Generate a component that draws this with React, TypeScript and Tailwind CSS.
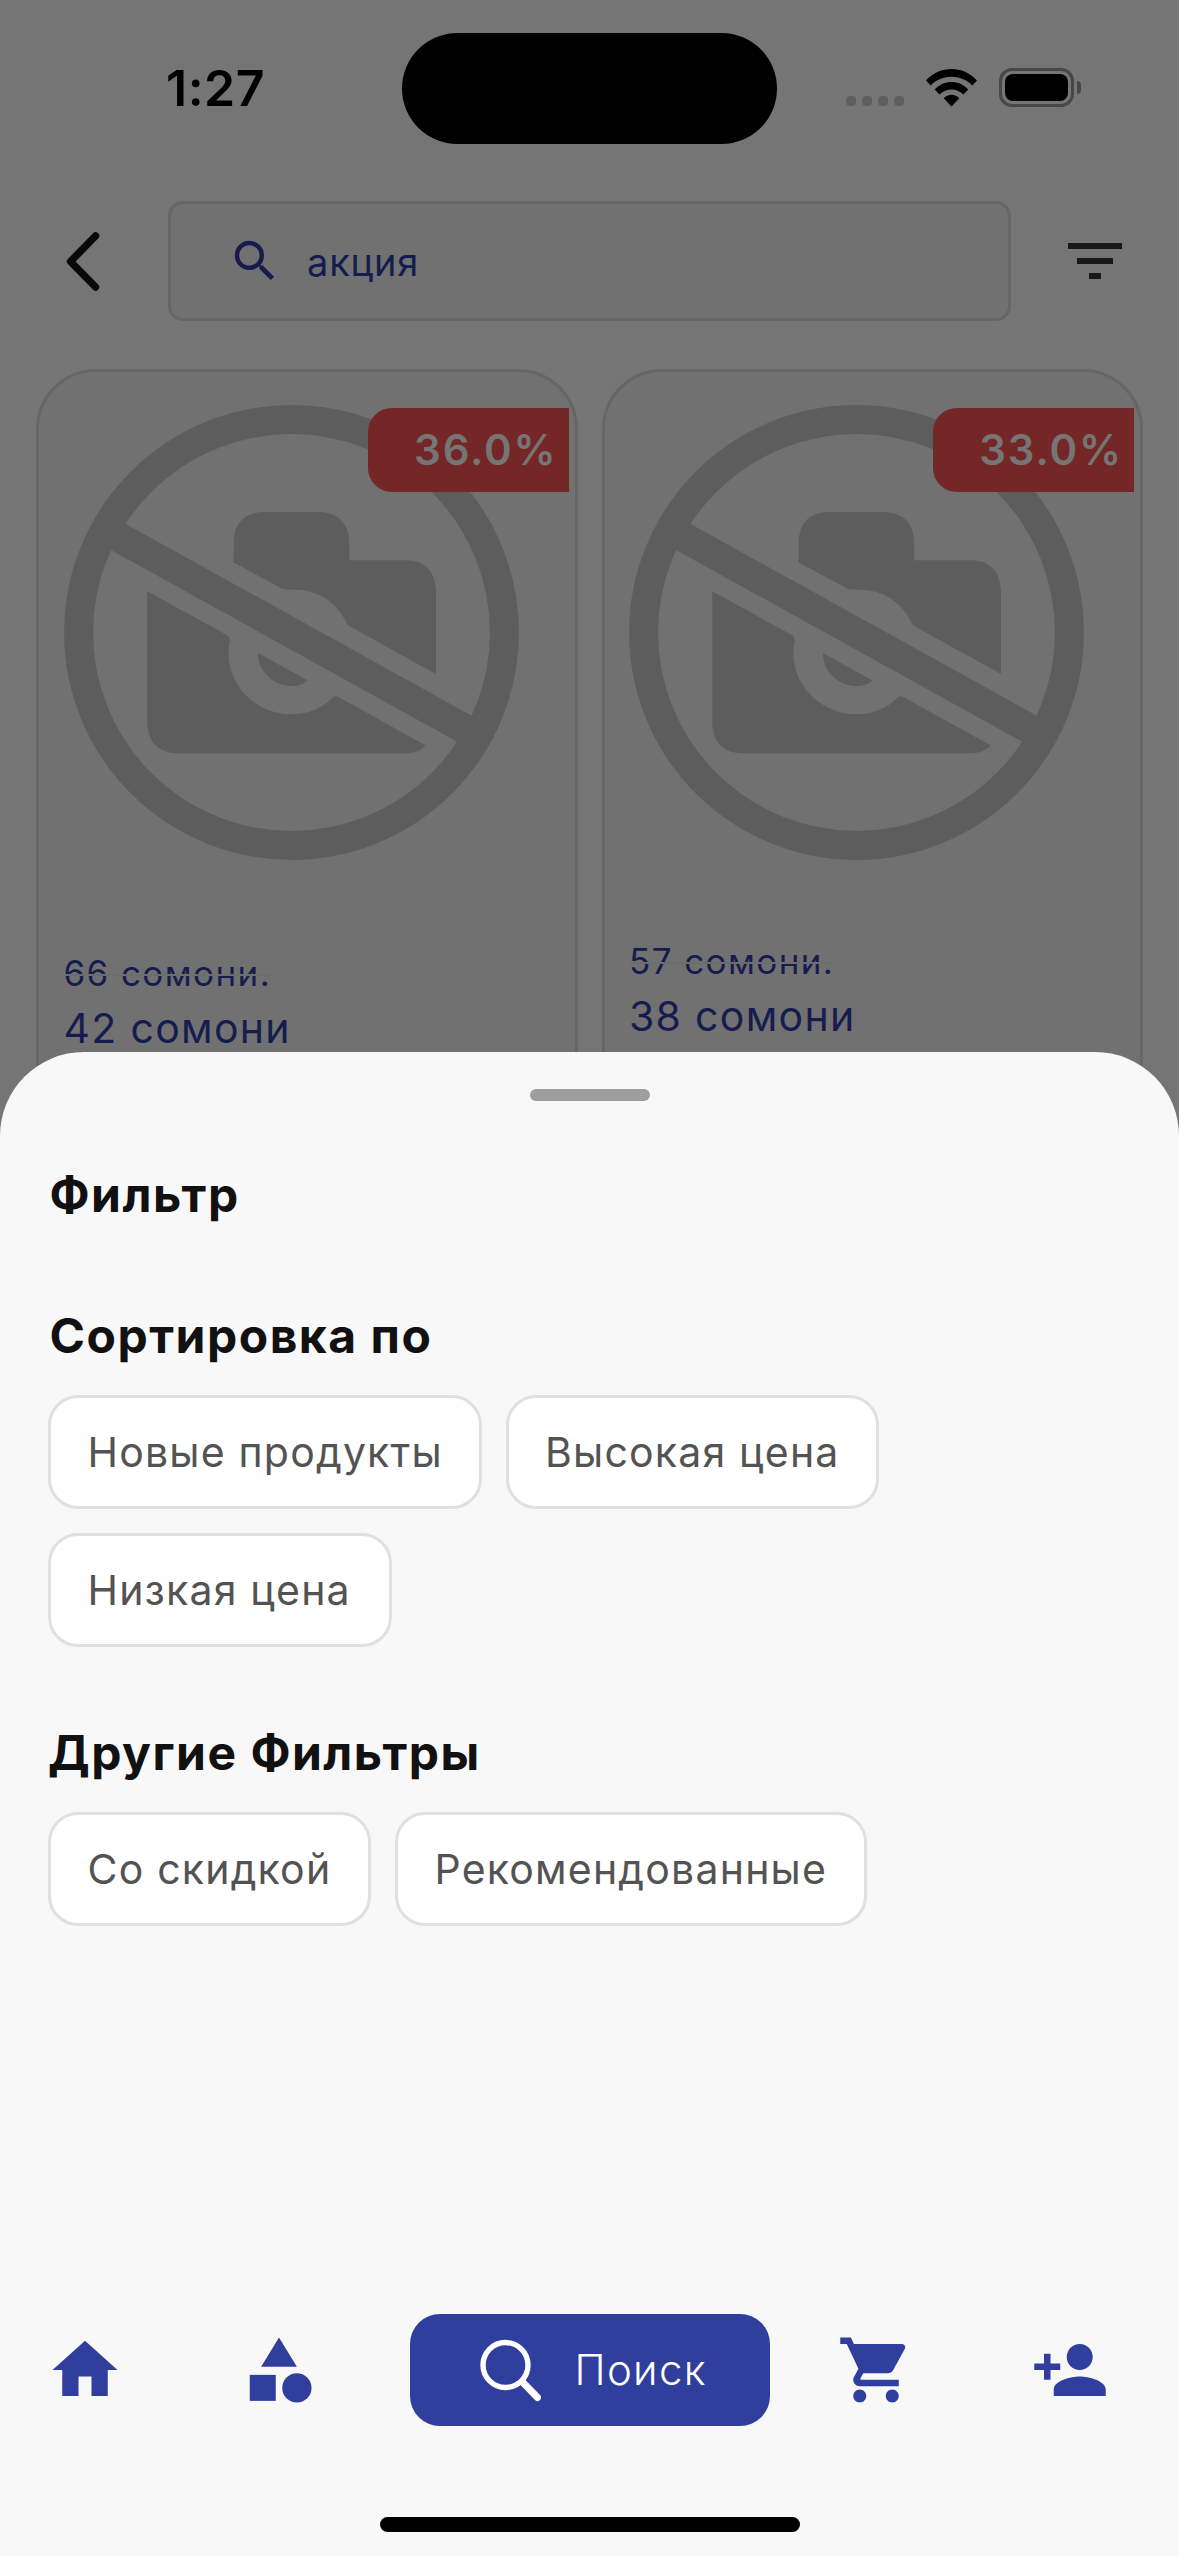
import React from "react";
import {
  MdHome,
  MdCategory,
  MdShoppingCart,
  MdPersonAdd,
  MdSearch,
  MdFilterList,
} from "react-icons/md";

function StatusBar() {
  return (
    <div className="flex h-[177px] items-start">
      <div className="mt-[63px] ml-[166px] w-[236px] text-[50px] leading-[50px] font-semibold tracking-[0.5px] text-black">
        1:27
      </div>
      <div className="mt-[33px] h-[111px] w-[375px] rounded-full bg-black" />
      <div className="mt-[96px] ml-[69px] flex gap-[6px]">
        {[0, 1, 2, 3].map((i) => (
          <span key={i} className="h-[10px] w-[10px] rounded-[4px] bg-[#5e5e5e]" />
        ))}
      </div>
      <svg className="mt-[69px] ml-[22px]" width="51" height="38" viewBox="0 0 51 38">
        <path d="M0 11.5C14-3.8 37-3.8 51 11.5L46.2 16.4C35 5 16 5 4.8 16.4Z" />
        <path d="M8.7 20.5C18 10.6 33 10.6 42.3 20.5L37.4 25.4C30.5 18.8 20.5 18.8 13.6 25.4Z" />
        <path d="M17.7 29.3C22 24.6 29 24.6 33.3 29.3L25.5 37.5Z" />
      </svg>
      <div className="mt-[68px] ml-[22px] h-[39px] w-[75px] rounded-[13px] border-[3px] border-[#474747] p-[3px]">
        <div className="h-full w-full rounded-[8px] bg-black" />
      </div>
      <div className="mt-[81px] ml-[3px] h-[13px] w-[4px] rounded-r-full bg-[#474747]" />
    </div>
  );
}

function SearchHeader() {
  return (
    <div className="flex h-[192px] items-start pt-[24px]">
      <svg className="mt-[31px] ml-[65px]" width="36" height="59" viewBox="0 0 36 59">
        <path
          d="M30.5 4L5.5 29.5L30.5 55"
          fill="none"
          stroke="#080808"
          strokeWidth="7.4"
          strokeLinecap="round"
          strokeLinejoin="round"
        />
      </svg>
      <div className="ml-[67px] flex h-[120px] w-[843px] items-center rounded-[15px] border-[3px] border-[#666666] bg-[#717171] pl-[57px]">
        <MdSearch size={54} color="#161d4e" />
        <span className="mt-[2px] ml-[25px] text-[38px] leading-[60px] tracking-[0.8px] text-[#161d4e]">
          акция
        </span>
      </div>
      <MdFilterList className="mt-[24px] ml-[48px]" size={72} color="#181818" />
    </div>
  );
}

function NoPhoto() {
  return (
    <svg width="455" height="455" viewBox="63.7 404.7 455 455" fill="#5d5d5d">
      <circle cx="291.2" cy="632.2" r="212.9" fill="none" stroke="#5d5d5d" strokeWidth="29" />
      <path d="M98 525.6L484 739.4" stroke="#5d5d5d" strokeWidth="29.8" />
      <path d="M232.7 561.8L233.4 558V541Q234.5 513.5 262 511.8H320Q347.5 513.5 348.8 541V560H407.6Q434 561.5 435.6 590V673.8L347.5 625Q331 589.5 292 589.3Q284 589.5 281.3 588Z" />
      <path d="M147 591L227 635Q229.8 637 229.4 641A63 61 0 0 0 291.6 714Q315 714 332.5 697.5Q335 695 338 696.8L425.6 745.3Q418 753 406 753H175.3Q148.5 751 147 723.6Z" />
      <path d="M257.6 652.7L307.3 680.2Q301 685.7 291 685.7C273 685.7 257.6 671 257.6 652.7Z" />
    </svg>
  );
}

function ProductCard({
  discount,
  oldPrice,
  price,
  tight,
}: {
  discount: string;
  oldPrice: string;
  price: string;
  tight?: boolean;
}) {
  return (
    <div className="relative h-[900px] w-[541.5px] rounded-[60px] border-[3px] border-[#666666] bg-[#717171] pt-[33px] pl-[24.5px]">
      <NoPhoto />
      <div className="absolute top-[36px] right-[6px] flex h-[84px] w-[201px] items-center justify-end rounded-l-[24px] bg-[#752626] pr-[11px] text-[42px] leading-[50px] font-semibold tracking-[1.8px] text-[#757575]">
        {discount}
      </div>
      <div className={tight ? "mt-[80px]" : "mt-[92px]"}>
        <div className="h-[42px] text-[35px] leading-[42px] tracking-[1.4px] text-[#161d4e]">
          <span className="line-through decoration-[#6d6d6d] decoration-[2px]">{oldPrice}</span>
        </div>
        <div className="mt-[9px] h-[50px] text-[41px] leading-[50px] tracking-[1.3px] text-[#161d4e]">
          {price}
        </div>
      </div>
    </div>
  );
}

function Chip({ label, width }: { label: string; width: string }) {
  return (
    <div
      className={
        "flex h-[114px] items-center rounded-[30px] border-[3px] border-[#e0e0e0] bg-white pt-[1px] pl-[36.5px] text-[41px] leading-[50px] tracking-[1.2px] whitespace-nowrap text-[#535353] " +
        width
      }
    >
      {label}
    </div>
  );
}

function BottomNav() {
  return (
    <div className="flex h-[112px] items-center">
      <MdHome className="ml-[46px]" size={78} color="#303e9e" />
      <MdCategory className="ml-[116px]" size={78} color="#303e9e" />
      <div className="ml-[91.5px] flex h-[112px] w-[360px] items-center rounded-[30px] bg-[#303e9e]">
        <svg className="ml-[69.5px]" width="64" height="64" viewBox="0 0 64 64" fill="none" stroke="#fff">
          <circle cx="26.5" cy="27" r="22.5" strokeWidth="5.4" />
          <path d="M43.5 44L58.5 59.5" strokeWidth="7" strokeLinecap="round" />
        </svg>
        <span className="ml-[31.5px] text-[42px] leading-[50px] font-light tracking-[1.3px] text-white">
          Поиск
        </span>
      </div>
      <MdShoppingCart className="ml-[67.5px]" size={78} color="#303e9e" />
      <MdPersonAdd className="ml-[116px]" size={78} color="#303e9e" />
    </div>
  );
}

function SectionTitle({ children, className }: { children: React.ReactNode; className: string }) {
  return (
    <div className={"text-[48px] leading-[60px] font-bold tracking-[1.5px] text-[#111111] " + className}>
      {children}
    </div>
  );
}

function FilterSheet() {
  return (
    <div className="absolute inset-x-0 top-[1052px] bottom-0 flex flex-col rounded-t-[84px] bg-[#f8f8f8] pt-[36.5px]">
      <div className="h-[12px] w-[120px] self-center rounded-full bg-[#9e9e9e]" />
      <SectionTitle className="mt-[64px] ml-[49.5px]">Фильтр</SectionTitle>
      <SectionTitle className="mt-[81px] ml-[49.5px]">Сортировка по</SectionTitle>
      <div className="mt-[29px] flex flex-wrap gap-[24px] pr-[200px] pl-[48px]">
        <Chip label="Новые продукты" width="w-[433.5px]" />
        <Chip label="Высокая цена" width="w-[373.5px]" />
        <Chip label="Низкая цена" width="w-[344px]" />
      </div>
      <SectionTitle className="mt-[76px] ml-[48px]">Другие Фильтры</SectionTitle>
      <div className="mt-[29px] flex flex-wrap gap-[24px] px-[48px]">
        <Chip label="Со скидкой" width="w-[323px]" />
        <Chip label="Рекомендованные" width="w-[471.5px]" />
      </div>
      <div className="mt-auto pb-[91px]">
        <BottomNav />
      </div>
      <div className="mb-[24px] h-[15px] w-[420px] self-center rounded-full bg-black" />
    </div>
  );
}

export default function App() {
  return (
    <div className="relative h-[2556px] w-[1179px] overflow-hidden bg-[#757575] font-['Inter',sans-serif]">
      <StatusBar />
      <SearchHeader />
      <div className="flex gap-[24px] pl-[36px]">
        <ProductCard discount="36.0%" oldPrice="66 сомони." price="42 сомони" />
        <ProductCard discount="33.0%" oldPrice="57 сомони." price="38 сомони" tight />
      </div>
      <FilterSheet />
    </div>
  );
}
